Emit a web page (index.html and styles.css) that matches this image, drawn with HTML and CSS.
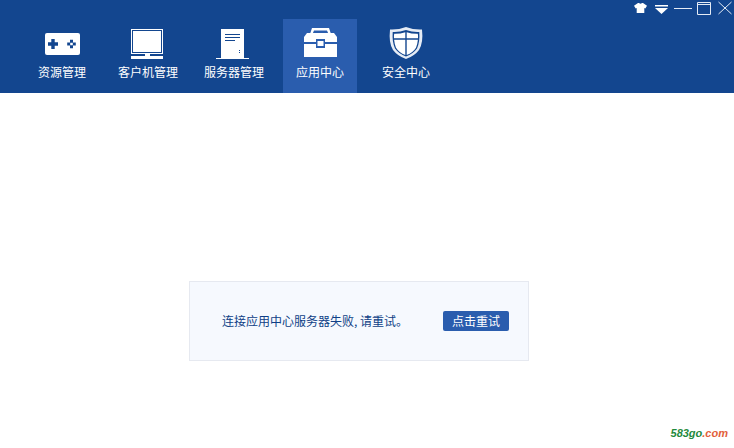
FILE: index.html
```html
<!DOCTYPE html>
<html lang="zh-CN">
<head>
  <meta charset="UTF-8">
  <title>应用中心</title>
  <link rel="stylesheet" href="styles.css">
</head>
<body>
  <div class="header">
    <div class="window-bar">
      <svg class="win-btn" width="16" height="14" viewBox="0 0 16 14"><path d="M4 2 L5 2 Q6.500 3.500 8 2 L9 2 L13 4.800 L11.300 7.500 L10.300 6.900 L10.300 12 L2.700 12 L2.700 6.900 L1.700 7.500 L0 4.800 Z" fill="#fff"/></svg>
      <svg class="win-btn" width="14" height="14" viewBox="0 0 14 14"><path d="M0 4 H13 V5.500 H0 Z M0 7 H13 L6.500 13 Z" fill="#fff"/></svg>
      <svg class="win-btn" width="18" height="14" viewBox="0 0 18 14"><path d="M0 7.500 H18" stroke="#e4ebf5" fill="none"/></svg>
      <svg class="win-btn" width="16" height="14" viewBox="0 0 16 14"><path d="M0.500 1.500 H13.500 V13.500 H0.500 Z" stroke="#e4ebf5" fill="none"/><path d="M0.500 3.500 H13.500" stroke="#e4ebf5" fill="none"/></svg>
      <svg class="win-btn" width="14" height="14" viewBox="0 0 14 14"><path d="M0.500 1 L13.500 13 M13.500 1 L0.500 13" stroke="#e4ebf5" fill="none"/></svg>
    </div>
    <div class="nav">
      <div class="tab">
        <svg class="tab-icon" width="36" height="32" viewBox="0 0 36 32">
          <rect x="1" y="6" width="35" height="22" rx="2" fill="#fff"/>
          <path d="M7.300 12 H10.700 V15.300 H14 V18.700 H10.700 V22 H7.300 V18.700 H4 V15.300 H7.300 Z" fill="#13468f"/>
          <path d="M23.200 15.500 h3 v3 h-3 Z M28.800 15.500 h3 v3 h-3 Z M26 12.700 h3 v3 h-3 Z M26 18.300 h3 v3 h-3 Z" fill="#13468f"/>
        </svg>
        <span class="tab-label">资源管理</span>
      </div>
      <div class="tab">
        <svg class="tab-icon" width="36" height="32" viewBox="0 0 36 32">
          <rect x="1.500" y="2.500" width="31" height="24" fill="none" stroke="#fff"/>
          <rect x="3" y="4" width="28" height="21" fill="#fff"/>
          <path d="M15 27 H20 V29 H33 V32 H1 V29 H15 Z" fill="#fff"/>
        </svg>
        <span class="tab-label">客户机管理</span>
      </div>
      <div class="tab">
        <svg class="tab-icon" width="36" height="32" viewBox="0 0 36 32">
          <path d="M5 2 H28 V32 H5 Z" fill="#fff"/>
          <path d="M0 31.500 H33" stroke="#fff" fill="none"/>
          <path d="M9 7.500 H24 M9 10.500 H24 M9 13.500 H19" stroke="#13468f" fill="none"/>
          <path d="M23 23 h1 v1 h-1 Z M23 25 h1 v1 h-1 Z" fill="#13468f"/>
        </svg>
        <span class="tab-label">服务器管理</span>
      </div>
      <div class="tab tab-active">
        <svg class="tab-icon" width="36" height="32" viewBox="0 0 36 32">
          <path d="M8 7 L10 1 H27 L29 7 H26.500 L25 3.500 H12 L10.500 7 Z" fill="#fff"/>
          <path d="M5 6 H32 L35 10 V15 H23 V12 H14 V15 H2 V10 Z" fill="#fff"/>
          <path d="M2 17 H14 V21 H23 V17 H35 V30 H2 Z" fill="#fff"/>
          <rect x="14" y="12" width="9" height="9" fill="#2a5dae"/>
          <rect x="15.500" y="14" width="6" height="5" fill="#fff"/>
        </svg>
        <span class="tab-label">应用中心</span>
      </div>
      <div class="tab">
        <svg class="tab-icon" width="36" height="32" viewBox="0 0 36 32">
          <path d="M18 0 Q26 3 34 2.500 Q35.500 16 31 23 Q26.500 29 18 32 Q9.500 29 5 23 Q0.500 16 2 2.500 Q10 3 18 0 Z" fill="#e6ecf5"/>
          <path d="M18 3 Q25 5.500 31.300 5 Q32 15 29 21.500 Q25 27 18 29.500 Q11 27 7 21.500 Q4 15 4.700 5 Q11 5.500 18 3 Z" fill="#13468f"/>
          <path d="M17.300 5.200 V11.300 H6 Q5.800 9 6.200 6.800 Q12 7 17.300 5.200 Z M18.700 5.200 Q24 7 29.800 6.800 Q30.200 9 30 11.300 H18.700 Z M6.100 12.700 H17.300 V28 Q11 25.800 8 20.800 Q6.500 17 6.100 12.700 Z M18.700 12.700 H29.900 Q29.500 17 28 20.800 Q25 25.800 18.700 28 Z" fill="#fff"/>
        </svg>
        <span class="tab-label">安全中心</span>
      </div>
    </div>
  </div>

  <div class="content">
    <div class="notice">
      <span class="notice-text">连接应用中心服务器失败, 请重试。</span>
      <span class="retry-btn">点击重试</span>
    </div>
  </div>

  <div class="watermark"><span class="wm-green">583go</span><span class="wm-red">.com</span></div>
</body>
</html>
```

FILE: styles.css
```css
html, body {
  margin: 0;
  height: 100%;
}
body {
  font-family: "Noto Sans CJK SC", "Liberation Sans", sans-serif;
  font-size: 12px;
  background-color: #fff;
  overflow: hidden;
  position: relative;
}
.header {
  height: 93px;
  background-color: #13468f;
}
.window-bar {
  height: 19px;
  display: flex;
  justify-content: flex-end;
  gap: 5px;
  padding: 1px 2px 0 0;
  box-sizing: border-box;
}
.win-btn {
  display: block;
}
.nav {
  display: flex;
  gap: 12px;
  padding-left: 25px;
}
.tab {
  width: 74px;
  height: 74px;
  display: flex;
  flex-direction: column;
  align-items: center;
  padding-top: 8px;
  box-sizing: border-box;
  color: #fff;
}
.tab-active {
  background-color: #2a5dae;
}
.tab-icon {
  display: block;
}
.tab-label {
  margin-top: 5px;
  line-height: 16px;
  white-space: nowrap;
}
.content {
  padding: 188px 0 0 189px;
}
.notice {
  width: 340px;
  height: 80px;
  box-sizing: border-box;
  display: flex;
  align-items: center;
  justify-content: space-between;
  padding: 0 19px 0 32px;
  background-color: #f6f9fe;
  border: 1px solid #e6e9f0;
  color: #0f3f86;
}
.notice-text {
  margin-top: -2px;
}
.retry-btn {
  width: 66px;
  height: 20px;
  line-height: 20px;
  text-align: center;
  background-color: #2a5dae;
  border-radius: 2px;
  color: #fff;
}
.watermark {
  position: absolute;
  right: 6px;
  bottom: 9px;
  font-family: "Liberation Sans", sans-serif;
  font-size: 11px;
  font-weight: bold;
  font-style: italic;
}
.wm-green {
  color: #1f8a3c;
}
.wm-red {
  color: #e2603a;
}
```
